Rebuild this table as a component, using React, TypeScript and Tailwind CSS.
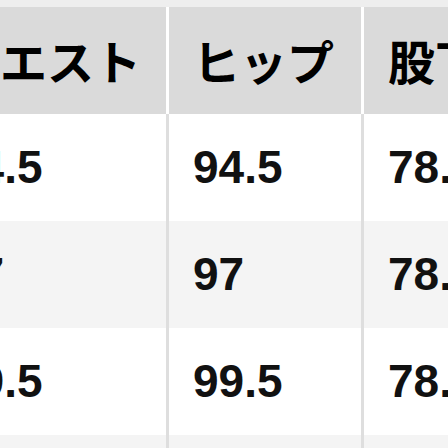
const rows = [
  {cells: ['64.5', '94.5', '78.5'], bg: 'bg-white'},
  {cells: ['67', '97', '78.5'], bg: 'bg-[#f4f4f4]'},
  {cells: ['69.5', '99.5', '78.5'], bg: 'bg-white'},
  {cells: ['', '', ''], bg: 'bg-[#f4f4f4]'},
];

const widths = ['w-[240px]', 'w-[195px]', 'w-[300px]'];

export default function App() {
  return (
    <div
      className="w-[448px] h-[448px] overflow-hidden bg-[#eeeeee] pt-[7px] text-[#111]"
      style={{fontFamily: '"Liberation Sans", "Noto Sans CJK JP", sans-serif'}}
    >
      <div className="-ml-[71px] w-max">
        <div className="flex bg-[#dadada]">
          {['ウエスト', 'ヒップ', '股下'].map((h, i) => (
            <div
              key={h}
              className={`${widths[i]} h-[107px] flex items-center px-6 pt-2 border-r-[3px] border-white text-[47px] font-bold text-black whitespace-nowrap`}
            >
              {h}
            </div>
          ))}
        </div>
        {rows.map((r, ri) => (
          <div key={ri} className={`flex ${r.bg}`}>
            {r.cells.map((c, i) => (
              <div
                key={i}
                className={`${widths[i]} h-[107px] flex items-center px-6 border-r-[3px] border-[#dedede] text-[46px] font-bold whitespace-nowrap`}
              >
                {c}
              </div>
            ))}
          </div>
        ))}
      </div>
    </div>
  );
}
